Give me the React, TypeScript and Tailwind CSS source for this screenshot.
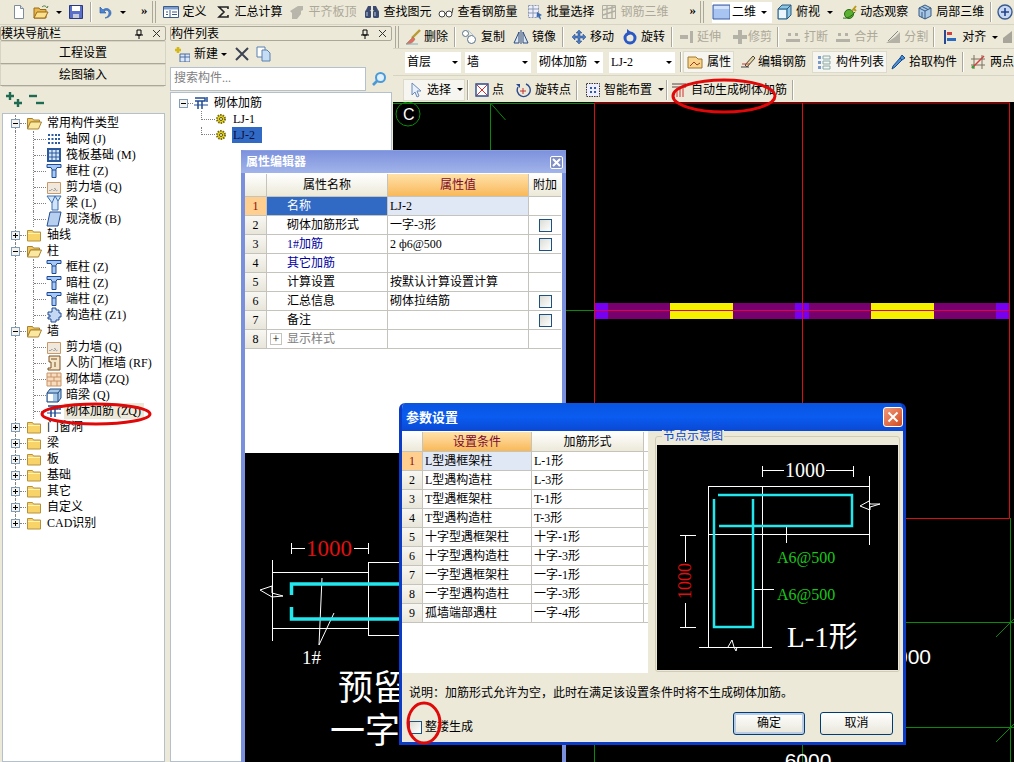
import { ReactNode } from "react";

type IconName = keyof typeof icons;

const icons = {
  file: (<><path d="M3.5 1.5h6l3 3v10h-9z" fill="#fff" stroke="#7f8c9a" /><path d="M9.5 1.5v3h3" fill="#dde" stroke="#7f8c9a" /></>),
  open: (<><path d="M1 4h5l1 1.5h6V14H1z" fill="#e8b84e" stroke="#9a6a14" /><path d="M1 14l3-6h11l-3 6z" fill="#fbe08e" stroke="#9a6a14" /><path d="M9 3c2-2 4-1 5 1l1-2" fill="none" stroke="#4a7a3a" /></>),
  save: (<><path d="M1.5 1.5h13v13h-13z" fill="#5a70c8" stroke="#2a3a80" /><path d="M4 2h8v5H4z" fill="#fff" /><path d="M5 10h6v4H5z" fill="#c8ccd8" /></>),
  undo: <path d="M3 3v6h6L7 7c3-2 5 0 5 2 0 3-2 4-4 5 4 0 6-3 6-5 0-4-5-6-8-3z" fill="#4a86d8" stroke="#24569c" strokeWidth=".6" />,
  define: (<><path d="M.5 2.5h15v11H.5z" fill="#fff" stroke="#3a5a8c" /><path d="M1 3h14v2.5H1z" fill="#7a9ccc" /><path d="M7 6v7M3 8h2M9 8h5M3 10.5h2M9 10.5h5" stroke="#3a5a8c" /></>),
  sigma: <path d="M3 3h10v2M13 3H4l5 5-5 5h9v-2" fill="none" stroke="#222" strokeWidth="1.6" />,
  flat: <path d="M1 7l8-5h5v4l-2 1v3l-4 5H3V9z" fill="#b8b6aa" />,
  binoc: (<><path d="M2 6l2-4h3v4zM14 6l-2-4H9v4z" fill="#3a4a70" /><rect x="1" y="6" width="6" height="8" rx="1.5" fill="#3a4a70" /><rect x="9" y="6" width="6" height="8" rx="1.5" fill="#3a4a70" /><path d="M3 8v4M11 8v4" stroke="#bcd" /></>),
  glasses: (<><circle cx="4" cy="10" r="3" fill="#fff" stroke="#444" /><circle cx="11" cy="10" r="3" fill="#fff" stroke="#444" /><path d="M7 9.5h1M14 9l1-5" stroke="#444" /></>),
  batch: (<><path d="M1.5 1.5h10v12h-10z" fill="#eef" stroke="#8a9ab0" strokeDasharray="2 1" /><path d="M1 5h11M1 9h11M6 2v11" stroke="#8a9ab0" /><path d="M10 8l5 3-2 1 1 3-1 .5-1.500-3-2 1z" fill="#3a6ab0" /></>),
  rebar3d: (<><path d="M1.500 1.500h13v13h-13z" fill="none" stroke="#b0aea2" /><path d="M2 6l12-3M2 11l12-4M6 2v12M11 2v12" stroke="#b0aea2" strokeWidth="1.4" /></>),
  square: (<><path d="M1 2h17v14H1z" fill="#a8c4f0" stroke="#3a5aa0" /><path d="M2 3h15v3H2z" fill="#d4e2fa" /></>),
  cube: (<><path d="M2 5l4-4h9v10l-4 4H2z" fill="#8cc4e4" stroke="#2a5a80" /><path d="M2 5h9v10M11 5l4-4" fill="none" stroke="#2a5a80" /><path d="M3 6h7v8H3z" fill="#eaf6fc" /></>),
  orbit: (<><circle cx="7" cy="10" r="4.500" fill="#5ab030" stroke="#2a6a14" /><path d="M10 7l4-5M12 5l2 2" stroke="#b89a20" strokeWidth="2" /><path d="M1 14c4 1 9-2 12-6" fill="none" stroke="#2a6a14" /></>),
  local3d: (<><path d="M8 1l6 3v8l-6 3-6-3V4z" fill="#a8c8e8" stroke="#3a5a80" /><path d="M2 4l6 3 6-3M8 7v8M5 2.500l6 3M5 13.500V8" fill="none" stroke="#3a5a80" /></>),
  zoom: (<><circle cx="8" cy="8" r="7" fill="#c8d8f0" stroke="#3a5a90" strokeWidth="1.400" /><path d="M8 4v8M4 8h8" stroke="#24428c" strokeWidth="1.600" /></>),
  erase: (<><path d="M15 1L7 9" stroke="#b89a30" strokeWidth="2.400" /><path d="M8 8L3 13l-2 2c4 0 7-1 9-5z" fill="#e86868" stroke="#884" strokeWidth=".6" /><path d="M1 15h12" stroke="#8ab" /></>),
  copy: (<><circle cx="4.500" cy="4.500" r="3" fill="#fff" stroke="#58708c" /><circle cx="10.500" cy="10.500" r="4" fill="#fff" stroke="#58708c" /><path d="M7 1l7 7" stroke="#b8c4d0" /></>),
  mirror: <path d="M8 1v14M6 3L1 14h5zM10 3l5 11h-5z" fill="#dde8f4" stroke="#2a4a80" />,
  move: <path d="M8 1l3 3H9v3h3V5l3 3-3 3V9H9v3h2l-3 3-3-3h2V9H4v2L1 8l3-3v2h3V4H5z" fill="#4a7ac0" stroke="#244a88" strokeWidth=".5" />,
  rotate: (<><circle cx="8" cy="9" r="5" fill="none" stroke="#2a58c4" strokeWidth="3" /><path d="M5 0l5 4-5 3z" fill="#2a58c4" /></>),
  extend: <path d="M1 6h8v4H1zM11 2h3v12h-3z" fill="#b4b2a6" />,
  trim: <path d="M6 1h4v5h5v4h-5v5H6v-5H1V6h5z" fill="#b4b2a6" />,
  cut: <path d="M1 10h14v3H1zM3 4h3v3H3zM10 4h3v3h-3z" fill="#b4b2a6" />,
  split: (<><path d="M1 14l9-6 5-5v11z" fill="#b4b2a6" /><path d="M3 12L13 2" stroke="#888" /></>),
  align: (<><path d="M2 1v14" stroke="#2a4a90" strokeWidth="2" /><path d="M4 3h5v3H4z" fill="#d04040" /><path d="M4 9h9v3H4z" fill="#2a6ac0" /></>),
  grayShape: <path d="M0 9l9-7v12H0z" fill="#a8a69a" />,
  props: (<><path d="M1 3h8l2 2h4v9H1z" fill="#f8d48c" stroke="#a07830" /><path d="M3 12l4-4 3 3 3-2" fill="none" stroke="#a04020" /></>),
  editBar: (<><path d="M1 13h8" stroke="#444" /><path d="M5 11l8-9 2 2-8 9z" fill="#e8d8a0" stroke="#444" /><path d="M2 10h8" stroke="#c04040" /></>),
  listIcon: (<><path d="M2 2h3v3H2zM2 7h3v3H2zM2 12h3v3H2z" fill="#7a9ac8" /><path d="M7 2h7v3H7zM7 7h7v3H7zM7 12h7v3H7z" fill="none" stroke="#8aa" /></>),
  pick: (<><path d="M12 1l3 3-3 2-2-2zM10 4l2 2-7 7-3 2 1-3z" fill="#4a90d8" stroke="#1a4a88" /></>),
  twoPts: (<><path d="M4 1v14M12 1v14M1 5h14M1 11h14" stroke="#7a7060" /><path d="M2 14L14 2" stroke="#d04040" strokeWidth="1.400" /><circle cx="3" cy="13" r="1.500" fill="#38a038" /></>),
  cursor: <path d="M4 1v12l3-3 2 5 2-1-2-5h4z" fill="#e8f0fc" stroke="#6a8ab8" />,
  point: (<><path d="M2 2h12v12H2z" fill="#fff" stroke="#2a4a90" strokeWidth="1.400" /><path d="M3 3l10 10M13 3L3 13" stroke="#d03030" /></>),
  rotPt: (<><path d="M11 2A6.500 6.500 0 1 1 3 5" fill="none" stroke="#2a4a90" strokeWidth="1.400" /><path d="M1 2l4 0 0 4z" fill="#2a4a90" /><path d="M8 6v6M5 9h6" stroke="#c03030" /></>),
  smart: (<><path d="M1.500 1.500h13v13h-13z" fill="#eef" stroke="#333" strokeDasharray="1.500 1" /><path d="M5 5h2v2H5zM9 5h2v2H9zM5 9h2v2H5zM9 9h2v2H9z" fill="#2a5aa0" /></>),
  auto: (<><path d="M1 2h14M1 5h14" stroke="#604040" /><path d="M6 6v9M9 6v9M12 6v9" stroke="#d03030" /></>),
  plus: (<><path d="M4 0v8M0 4h8" stroke="#1f6a52" strokeWidth="2.400" /><path d="M12 7v8M8 11h8" stroke="#1f6a52" strokeWidth="2.400" /></>),
  minus: (<><path d="M0 4h8" stroke="#1f6a52" strokeWidth="2.400" /><path d="M7 11h8" stroke="#1f6a52" strokeWidth="2.400" /></>),
  newItem: (<><path d="M4 1v6M1 4h6" stroke="#d4b818" strokeWidth="2.600" /><path d="M6 8h10v8H6z" fill="#dce8f8" stroke="#4a6ca0" /><path d="M6 11h10M11 8v8" stroke="#4a6ca0" /></>),
  del: <path d="M2 2l12 12M14 2L2 14" stroke="#3c4454" strokeWidth="2" />,
  dup: (<><path d="M1 1h8v10H1z" fill="#fff" stroke="#5a80b0" /><path d="M6 4h5l3 3v8H6z" fill="#c4dcf4" stroke="#5a80b0" /></>),
  search: (<><circle cx="9.500" cy="6.500" r="4.500" fill="#e0f0fc" stroke="#4a9ad8" strokeWidth="2" /><path d="M6 10l-4 4" stroke="#4a9ad8" strokeWidth="2.600" /></>),
  folder: (<><path d="M1.500 3.500h5l1 1.500h7v9h-13z" fill="#f8d468" stroke="#b8923a" /><path d="M2 6h12v1H2z" fill="#fff4b8" /></>),
  folderOpen: (<><path d="M1.500 3.500h5l1 1.500h6v2h-9l-3 7z" fill="#f0c860" stroke="#a88232" /><path d="M1.500 14l3-7h11l-3 7z" fill="#fbe8a0" stroke="#a88232" /></>),
  grid: <path d="M2 3h2v2H2zM5.500 3h2v2h-2zM9 3h2v2H9zM12 3h2v2h-2zM2 7h2v2H2zM5.500 7h2v2h-2zM9 7h2v2H9zM12 7h2v2h-2zM2 11h2v2H2zM5.500 11h2v2h-2zM9 11h2v2H9zM12 11h2v2h-2z" fill="#2a5aa4" />,
  raft: (<><path d="M1 1h14v14H1z" fill="#2a5a9c" /><path d="M3 3h10v10H3z" fill="#d4e4f8" /><path d="M6 3v10M10 3v10M3 6h10M3 10h10" stroke="#2a5a9c" /></>),
  column: (<><path d="M1 1.500h14v3H11l-1 2v8H6v-8l-1-2H1z" fill="#a8c8f4" stroke="#1f4a94" /><path d="M6 7h4" stroke="#1f4a94" /></>),
  shear: (<><path d="M1.500 3.500h13v11h-13z" fill="#f0e8dc" stroke="#c89a68" /><path d="M3 12l1-1 1 1 1-2 2 2 1-3 1 3 2-1" fill="none" stroke="#888" strokeDasharray="1 1" /></>),
  beam: (<><path d="M1 1h14l-3 5v9H6V8z" fill="#d4e4f8" stroke="#3a70b0" /><path d="M6 8l3-7M12 6L9 1" stroke="#3a70b0" /></>),
  slab: <path d="M4 1h11l-3 14H1z" fill="#b8d0f0" stroke="#1f4a94" />,
  struct: <path d="M6 1h4v2h3v3h2v4h-2v3h-3v2H5v-3H2v-2h2V8H2V5h4z" fill="#c4d8f4" stroke="#1f4a94" />,
  door: (<><path d="M3 1h11v14H2v-2h3V7H3z" fill="#f4e4c8" stroke="#7a5020" /><path d="M5 4h6M9 7v5" stroke="#7a5020" /></>),
  brick: (<><path d="M1 2h14v13H1z" fill="#f8dcc0" stroke="#c89468" /><path d="M1 6h14M1 10h14M5 2v4M11 2v4M8 6v4M5 10v5M11 10v5" stroke="#c89468" /></>),
  darkBeam: (<><path d="M1 6l3-4h11v9l-3 4H1z" fill="#a8c8e8" stroke="#1f4a80" /><path d="M1 6h11v9M12 6l3-4" fill="none" stroke="#1f4a80" /><path d="M2 7h5v7H2z" fill="#fff" /></>),
  rebar: (<><path d="M2 3h10v3H2M5 6v8M9 6v8M14 2v5" fill="none" stroke="#1f4a94" strokeWidth="1.500" /><path d="M1 10h14" stroke="#1f4a94" /></>),
  gear: (<><circle cx="6" cy="6" r="4" fill="#e8d818" stroke="#7a6a10" strokeDasharray="1.500 1" strokeWidth="2" /><circle cx="6" cy="6" r="1.500" fill="#fff" stroke="#5a5010" /></>),
};

function Ico({ name, size = 16 }: { name: IconName; size?: number }) {
  return (
    <svg width={size} height={size} viewBox={size === 12 ? "0 0 12 12" : size === 18 ? "0 0 18 18" : "0 0 16 16"} className="shrink-0">
      {icons[name]}
    </svg>
  );
}

const Caret = ({ className = "" }: { className?: string }) => (
  <span className={`inline-block w-0 h-0 border-x-[3px] border-x-transparent border-t-[3px] border-t-black ${className}`} />
);

const Sep = ({ className = "" }: { className?: string }) => (
  <span className={`inline-block w-[2px] h-[20px] border-l border-[#aca899] border-r border-r-white shrink-0 ${className}`} />
);

const Grip = ({ className = "" }: { className?: string }) => (
  <span className={`inline-block w-[4px] h-[22px] border-x border-[#aca899] shrink-0 ${className}`} />
);

function Tool({
  icon,
  label,
  off,
  caret,
  pressed,
  gap = "gap-[4px]",
  className = "",
}: {
  icon: IconName;
  label?: string;
  off?: boolean;
  caret?: boolean;
  pressed?: boolean;
  gap?: string;
  className?: string;
}) {
  return (
    <div
      className={`flex items-center h-[22px] shrink-0 whitespace-nowrap ${gap} ${off ? "text-[#aca899]" : "text-black"} ${
        pressed ? "bg-[#f6f5ef] border border-[#dcdacb]" : ""
      } ${className}`}
    >
      <Ico name={icon} />
      {label && <span>{label}</span>}
      {caret && <Caret className="ml-[3px]" />}
    </div>
  );
}

const More = ({ className = "" }: { className?: string }) => (
  <span className={`text-[13px] leading-none font-bold -mt-[6px] shrink-0 ${className}`}>»</span>
);

function TopBar() {
  return (
    <div className="flex items-center h-[25px] shrink-0 border-b border-[#d8d4c4]">
      <Grip className="ml-[2px] opacity-0" />
      <Tool icon="file" className="ml-[5px]" />
      <Tool icon="open" className="ml-[6px]" caret />
      <Tool icon="save" className="ml-[6px]" />
      <Sep className="ml-[6px]" />
      <Tool icon="undo" className="ml-[5px]" caret />
      <More className="ml-[15px]" />
      <Grip className="ml-[4px]" />
      <Tool icon="define" label="定义" className="ml-[7px]" />
      <Tool icon="sigma" label="汇总计算" className="ml-[8px]" />
      <Tool icon="flat" label="平齐板顶" off className="ml-[6px]" />
      <Tool icon="binoc" label="查找图元" className="ml-[7px]" />
      <Tool icon="glasses" label="查看钢筋量" className="ml-[6px]" />
      <Tool icon="batch" label="批量选择" className="ml-[9px]" />
      <Tool icon="rebar3d" label="钢筋三维" off className="ml-[6px]" />
      <More className="ml-[21px]" />
      <Grip className="ml-[4px]" />
      <div className="ml-[8px] flex items-center h-[21px] w-[60px] bg-white shrink-0">
        <Ico name="square" size={18} />
        <span className="ml-[2px]">二维</span>
        <Caret className="ml-[5px]" />
      </div>
      <Tool icon="cube" label="俯视" caret className="ml-[4px]" />
      <Tool icon="orbit" label="动态观察" className="ml-[9px]" gap="gap-[2px]" />
      <Tool icon="local3d" label="局部三维" className="ml-[9px]" gap="gap-[3px]" />
      <Sep className="ml-[6px]" />
      <Tool icon="zoom" className="ml-[5px]" />
    </div>
  );
}

function PanelTitle({ title }: { title: string }) {
  return (
    <div className="flex items-center h-[15px] mt-[1px] border border-[#aca899] rounded-[2px] shrink-0">
      <span className="flex-1 leading-none">{title}</span>
      <svg width="10" height="10" viewBox="0 0 10 10" className="mr-[8px]">
        <path d="M3 1h4v5H3zM1 6h8M5 6v4" fill="none" stroke="#000" />
      </svg>
      <svg width="9" height="9" viewBox="0 0 9 9" className="mr-[4px]">
        <path d="M1 1l7 7M8 1L1 8" stroke="#333" />
      </svg>
    </div>
  );
}

function Box({ open, className = "" }: { open: boolean; className?: string }) {
  return (
    <span className={`relative w-[9px] h-[9px] shrink-0 border border-[#7f9db9] bg-[#f4f3ee] flex items-center justify-center ${className}`}>
      <span className="w-[5px] h-px bg-black" />
      {!open && <span className="absolute w-px h-[5px] bg-black" />}
    </span>
  );
}

function Group({ label, open, last }: { label: string; open: boolean; last?: boolean }) {
  return (
    <div className="flex h-4 items-center ml-[12px] relative">
      <span className={`absolute left-0 top-0 border-l border-dotted border-[#808080] ${last ? "h-2" : "h-4"}`} />
      <Box open={open} className="-ml-[4px] z-10" />
      <span className="w-[6px] border-t border-dotted border-[#808080]" />
      <Ico name={open ? "folderOpen" : "folder"} />
      <span className="ml-[5px] whitespace-nowrap">{label}</span>
    </div>
  );
}

function Leaf({ icon, label, mark }: { icon: IconName; label: string; mark?: boolean }) {
  return (
    <div className="flex h-4 items-center ml-[12px] border-l border-dotted border-[#808080]">
      <span className="relative w-[18px] h-4 border-r border-dotted border-[#808080] shrink-0" />
      <span className="w-[12px] border-t border-dotted border-[#808080] shrink-0" />
      <Ico name={icon} />
      <span className={`ml-[2px] px-[2px] h-4 leading-4 whitespace-nowrap ${mark ? "bg-[#ece9d8] w-[80px]" : ""}`}>{label}</span>
    </div>
  );
}

function NavPanel() {
  return (
    <aside className="w-[166px] shrink-0 flex flex-col">
      <PanelTitle title="模块导航栏" />
      <button className="h-[23px] border border-[#d8d4c4] border-b-[#aca899] text-center shrink-0">工程设置</button>
      <button className="h-[22px] border border-[#d8d4c4] border-b-[#aca899] text-center shrink-0">绘图输入</button>
      <div className="h-[27px] mx-[2px] flex items-center gap-[7px] pl-[4px] border-t border-[#d8d4c4] shrink-0">
        <Ico name="plus" />
        <Ico name="minus" />
      </div>
      <div className="flex-1 bg-white ml-[2px] mr-[1px] border border-[#b4c0cc] pt-px overflow-hidden">
        <Group label="常用构件类型" open />
        <Leaf icon="grid" label="轴网 (J)" />
        <Leaf icon="raft" label="筏板基础 (M)" />
        <Leaf icon="column" label="框柱 (Z)" />
        <Leaf icon="shear" label="剪力墙 (Q)" />
        <Leaf icon="beam" label="梁 (L)" />
        <Leaf icon="slab" label="现浇板 (B)" />
        <Group label="轴线" open={false} />
        <Group label="柱" open />
        <Leaf icon="column" label="框柱 (Z)" />
        <Leaf icon="column" label="暗柱 (Z)" />
        <Leaf icon="column" label="端柱 (Z)" />
        <Leaf icon="struct" label="构造柱 (Z1)" />
        <Group label="墙" open />
        <Leaf icon="shear" label="剪力墙 (Q)" />
        <Leaf icon="door" label="人防门框墙 (RF)" />
        <Leaf icon="brick" label="砌体墙 (ZQ)" />
        <Leaf icon="darkBeam" label="暗梁 (Q)" />
        <Leaf icon="rebar" label="砌体加筋 (ZQ)" mark />
        <Group label="门窗洞" open={false} />
        <Group label="梁" open={false} />
        <Group label="板" open={false} />
        <Group label="基础" open={false} />
        <Group label="其它" open={false} />
        <Group label="自定义" open={false} />
        <Group label="CAD识别" open={false} last />
      </div>
    </aside>
  );
}

function ListPanel() {
  return (
    <aside className="w-[222px] ml-[4px] mr-[1px] shrink-0 flex flex-col">
      <PanelTitle title="构件列表" />
      <div className="h-[26px] flex items-center pl-[4px] shrink-0">
        <Ico name="newItem" />
        <span className="ml-[4px]">新建</span>
        <Caret className="ml-[3px]" />
        <span className="ml-[7px]"><Ico name="del" /></span>
        <span className="ml-[6px]"><Ico name="dup" /></span>
      </div>
      <div className="flex h-[24px] shrink-0">
        <div className="w-[196px] bg-white border border-[#b4c0cc] pl-[3px] leading-[21px] text-[#808080]">搜索构件...</div>
        <div className="flex-1 flex items-center justify-center"><Ico name="search" /></div>
      </div>
      <div className="flex-1 bg-white border border-[#b4c0cc] mt-[1px] pl-[8px] pt-[2px] overflow-hidden">
        <div className="flex h-4 items-center">
          <Box open />
          <span className="w-[5px] border-t border-dotted border-[#808080]" />
          <Ico name="rebar" />
          <span className="ml-[5px]">砌体加筋</span>
        </div>
        {["LJ-1", "LJ-2"].map((name, i) => (
          <div key={name} className="flex h-4 items-center ml-[22px]">
            <span className={`border-l border-b border-dotted border-[#808080] w-[14px] self-start ${i === 0 ? "h-[9px]" : "h-[8px]"}`} />
            <Ico name="gear" size={12} />
            <span className={`ml-[5px] pl-[1px] leading-4 ${i === 1 ? "bg-[#316ac5] w-[30px] h-[16px] text-[#10103a]" : ""}`}>{name}</span>
          </div>
        ))}
      </div>
    </aside>
  );
}

function Combo({ label, className }: { label: string; className: string }) {
  return (
    <div className={`h-[21px] bg-white flex items-center justify-between pl-[2px] pr-[3px] shrink-0 ${className}`}>
      <span>{label}</span>
      <Caret />
    </div>
  );
}

function CadCanvas() {
  return (
    <svg viewBox="393 102 621 660" className="w-full flex-1 min-h-0 bg-black block">
      <g stroke="#0a8a0a" fill="none">
        <path d="M393 103.500H594M490.500 103v47M490.500 103l15 17M566 310.500h30" />
        <circle cx="408" cy="114" r="12" />
        <path d="M802.500 745v20M1010.500 518v250M906 622.500h108M906 727.500h108M996 637l18-18M996 742l18-18M594.500 745v20" />
      </g>
      <text x="403" y="120" fill="#fff" fontSize="16" fontFamily="Liberation Sans">C</text>
      <rect x="594" y="303" width="416" height="16" fill="#78006e" />
      <rect x="595" y="303" width="13" height="16" fill="#7800f0" />
      <rect x="795" y="303" width="14" height="16" fill="#7800f0" />
      <rect x="996" y="303" width="14" height="16" fill="#7800f0" />
      <rect x="670" y="303" width="63" height="16" fill="#f4f000" />
      <rect x="871" y="303" width="63" height="16" fill="#f4f000" />
      <path d="M594 310.500h416" stroke="#e00050" />
      <path d="M594.500 103H1010M594.500 103V404M802.500 103V404M1009.500 103V518.500H906" fill="none" stroke="#d81010" />
      <text x="931" y="664" fill="#fff" fontSize="21" textAnchor="end" fontFamily="Liberation Sans">000</text>
      <text x="808" y="768" fill="#fff" fontSize="21" textAnchor="middle" fontFamily="Liberation Sans">6000</text>
    </svg>
  );
}

function RightArea() {
  return (
    <div className="flex-1 min-w-0 flex flex-col">
      <div className="h-[24px] flex items-center shrink-0 overflow-hidden">
        <Grip className="ml-[2px]" />
        <Tool icon="erase" label="删除" className="ml-[6px]" gap="gap-[3px]" />
        <Sep className="ml-[6px]" />
        <Tool icon="copy" label="复制" className="ml-[5px]" gap="gap-[4px]" />
        <Tool icon="mirror" label="镜像" className="ml-[8px]" gap="gap-[3px]" />
        <Sep className="ml-[6px]" />
        <Tool icon="move" label="移动" className="ml-[7px]" gap="gap-[3px]" />
        <Tool icon="rotate" label="旋转" className="ml-[8px]" gap="gap-[3px]" />
        <Sep className="ml-[6px]" />
        <Tool icon="extend" label="延伸" off className="ml-[6px]" gap="gap-[2px]" />
        <Tool icon="trim" label="修剪" off className="ml-[11px]" gap="gap-[0px]" />
        <Sep className="ml-[5px]" />
        <Tool icon="cut" label="打断" off className="ml-[6px]" gap="gap-[3px]" />
        <Tool icon="cut" label="合并" off className="ml-[7px]" gap="gap-[3px]" />
        <Tool icon="split" label="分割" off className="ml-[7px]" gap="gap-[3px]" />
        <Sep className="ml-[5px]" />
        <Tool icon="align" label="对齐" caret className="ml-[8px]" gap="gap-[3px]" />
        <Tool icon="grayShape" className="ml-[5px]" />
      </div>
      <div className="h-[27px] flex items-center shrink-0 border-t border-[#d8d4c4] overflow-hidden -mt-px">
        <Grip className="ml-[2px] opacity-0" />
        <Combo label="首层" className="ml-[6px] w-[56px]" />
        <Combo label="墙" className="ml-[4px] w-[66px]" />
        <Combo label="砌体加筋" className="ml-[6px] w-[66px]" />
        <Combo label="LJ-2" className="ml-[6px] w-[66px]" />
        <Sep className="ml-[5px]" />
        <Tool icon="props" label="属性" pressed className="ml-[1px] pl-[3px] pr-[2px]" />
        <Tool icon="editBar" label="编辑钢筋" className="ml-[6px]" gap="gap-[2px]" />
        <Tool icon="listIcon" label="构件列表" pressed className="ml-[6px] pl-[3px] pr-[2px]" />
        <Tool icon="pick" label="拾取构件" className="ml-[3px]" gap="gap-[3px]" />
        <Sep className="ml-[5px]" />
        <Tool icon="twoPts" label="两点" className="ml-[6px]" gap="gap-[4px]" />
      </div>
      <div className="h-[27px] flex items-center shrink-0 border-t border-[#d8d4c4] pt-px">
        <Grip className="ml-[2px] opacity-0" />
        <Tool icon="cursor" label="选择" caret pressed className="ml-[4px] pl-[4px] pr-[1px]" gap="gap-[3px]" />
        <Sep className="ml-[2px]" />
        <Tool icon="point" label="点" className="ml-[5px]" gap="gap-[2px]" />
        <Tool icon="rotPt" label="旋转点" className="ml-[11px]" gap="gap-[4px]" />
        <Sep className="ml-[5px]" />
        <Tool icon="smart" label="智能布置" caret className="ml-[7px]" gap="gap-[3px]" />
        <Sep className="ml-[2px]" />
        <Tool icon="auto" label="自动生成砌体加筋" className="ml-[3px]" gap="gap-[4px]" />
        <Sep className="ml-[5px]" />
      </div>
      <CadCanvas />
    </div>
  );
}

const Check = ({ className = "" }: { className?: string }) => (
  <span className={`block w-[13px] h-[13px] border border-[#1c5180] bg-gradient-to-br from-[#dcdcd6] to-white shrink-0 ${className}`} />
);

function RowNum({ n, active }: { n: number; active?: boolean }) {
  return (
    <div
      className={`h-full flex items-center justify-center border-r border-[#c4c4bc] ${
        active ? "bg-[#ffcf8f] text-[#8a1010]" : "bg-gradient-to-b from-[#f8f7f2] to-[#e8e6da]"
      }`}
    >
      {n}
    </div>
  );
}

const attrs = [
  { name: "名称", value: "LJ-2", check: false },
  { name: "砌体加筋形式", value: "一字-3形", check: true },
  { name: "1#加筋", value: "2 ф6@500", check: true, blue: true },
  { name: "其它加筋", value: "", check: false, blue: true },
  { name: "计算设置", value: "按默认计算设置计算", check: false },
  { name: "汇总信息", value: "砌体拉结筋", check: true },
  { name: "备注", value: "", check: true },
  { name: "显示样式", value: "", check: false, gray: true },
];

function PropertyEditor() {
  return (
    <div className="absolute left-[241px] top-[150px] w-[325px] h-[612px] flex flex-col border-x-[4px] border-[#7b90dc] border-t border-t-[#8aa0e4]">
      <div className="h-[22px] -mx-[4px] flex items-center justify-between pl-[5px] pr-[3px] bg-gradient-to-b from-[#7d92dc] to-[#a2b4ea] shrink-0">
        <span className="text-white font-bold leading-none">属性编辑器</span>
        <span className="w-[13px] h-[13px] rounded-[2px] bg-[#8290c8] border border-white flex items-center justify-center">
          <svg width="9" height="9" viewBox="0 0 9 9"><path d="M1 1l7 7M8 1L1 8" stroke="#fff" strokeWidth="2" /></svg>
        </span>
      </div>
      <div className="h-[280px] bg-white shrink-0 pt-px pr-px">
        <div className="grid grid-cols-[22px_121px_141px_1fr] h-[23px] border-b border-[#c4c4bc]">
          <div className="bg-gradient-to-b from-white to-[#ece9d8] border-r border-[#c4c4bc]" />
          <div className="bg-gradient-to-b from-white to-[#ece9d8] border-r border-[#c4c4bc] flex items-center justify-center">属性名称</div>
          <div className="bg-gradient-to-b from-[#ffe2a8] to-[#f8b858] border-r border-[#c4c4bc] flex items-center justify-center text-[#7a0a30]">属性值</div>
          <div className="bg-gradient-to-b from-white to-[#ece9d8] flex items-center justify-center">附加</div>
        </div>
        {attrs.map((a, i) => (
          <div key={a.name} className="grid grid-cols-[22px_121px_141px_1fr] h-[19px] border-b border-[#c4c4bc]">
            <RowNum n={i + 1} active={i === 0} />
            <div
              className={`flex items-center pl-[20px] border-r border-[#c4c4bc] ${
                i === 0 ? "bg-[#316ac5] text-white" : a.blue ? "text-[#0000a0]" : a.gray ? "text-[#808080]" : ""
              }`}
            >
              {a.gray && (
                <span className="w-[12px] h-[12px] -ml-[17px] mr-[5px] border border-[#c4c4bc] flex items-center justify-center text-black leading-none text-[12px]">+</span>
              )}
              {a.name}
            </div>
            <div className={`flex items-center pl-[2px] border-r border-[#c4c4bc] whitespace-nowrap ${i === 0 ? "bg-[#e0e8f6]" : ""}`}>{a.value}</div>
            <div className="flex items-center justify-center">{a.check && <Check />}</div>
          </div>
        ))}
      </div>
      <svg viewBox="245 453 317 309" className="w-full flex-1 min-h-0 bg-black block">
        <g stroke="#fff" fill="none">
          <path d="M291.500 543v11M368.500 543v11M291 548.500h14M354 548.500h14" />
          <path d="M272.500 560v81M272 572.500h96M272 628.500h96M368.500 562v73M368 562.500h40M368 635.500h40" />
          <path d="M260 590l12-4v7l11 3-11 1-12-7zM322 578l-3 67 15-32" />
        </g>
        <path d="M291.500 595v-11H410M291.500 607v12H410" fill="none" stroke="#22e8ee" strokeWidth="3.500" />
        <text x="329" y="556" fill="#e01010" fontSize="23" textAnchor="middle" fontFamily="Liberation Serif">1000</text>
        <text x="302" y="664" fill="#fff" fontSize="19" fontFamily="Liberation Serif">1#</text>
        <text x="338" y="700" fill="#fff" fontSize="35" fontFamily="Noto Sans CJK SC">预留</text>
        <text x="330" y="743" fill="#fff" fontSize="35" fontFamily="Noto Sans CJK SC">一字</text>
      </svg>
    </div>
  );
}

const params = [
  ["L型遇框架柱", "L-1形"],
  ["L型遇构造柱", "L-3形"],
  ["T型遇框架柱", "T-1形"],
  ["T型遇构造柱", "T-3形"],
  ["十字型遇框架柱", "十字-1形"],
  ["十字型遇构造柱", "十字-3形"],
  ["一字型遇框架柱", "一字-1形"],
  ["一字型遇构造柱", "一字-3形"],
  ["孤墙端部遇柱", "一字-4形"],
];

function NodeDiagram() {
  return (
    <svg viewBox="657 446 241 225" className="w-[241px] h-[225px] bg-black block">
      <g stroke="#fff" fill="none">
        <path d="M762.500 467v11M853.500 467v11M762 471.500h22M826 471.500h27" />
        <path d="M708.500 487.500H869M708.500 535.500H869M708.500 487v161M762.500 487v161M699 648.500h73M869.500 477v69M786.500 527v17" />
        <path d="M860 507l9-5 1 3 10 0-10 3 0 3zM728 648l4-7 2 7 2 4 1-4M754 590.500h20" />
        <path d="M685.500 537v26M685.500 604v24M680 536.500h16M680 628.500h16" />
      </g>
      <path d="M718 496h134v31H719M714 500v128h39V500" fill="none" stroke="#22e8ee" strokeWidth="2.500" />
      <text x="805" y="478" fill="#fff" fontSize="20" textAnchor="middle" fontFamily="Liberation Serif">1000</text>
      <text x="0" y="0" fill="#e01010" fontSize="18" textAnchor="middle" fontFamily="Liberation Serif" transform="translate(691 582) rotate(-90)">1000</text>
      <text x="777" y="564" fill="#18c818" fontSize="16" fontFamily="Liberation Serif">A6@500</text>
      <text x="777" y="601" fill="#18c818" fontSize="16" fontFamily="Liberation Serif">A6@500</text>
      <text x="787" y="648" fill="#fff" fontSize="29" fontFamily="Liberation Serif, Noto Sans CJK SC">L-1形</text>
    </svg>
  );
}

function ParamDialog() {
  return (
    <div className="absolute left-[399px] top-[403px] w-[507px] h-[342px] flex flex-col rounded-t-[6px] overflow-hidden border-x-[3px] border-b-[3px] border-[#0a3cc8]">
      <div className="h-[28px] -mx-[3px] flex items-center justify-between pl-[7px] pr-[3px] bg-gradient-to-b from-[#0a54e0] via-[#0a5cf0] to-[#0a48d4] shrink-0">
        <span className="text-white font-bold text-[13px] leading-none">参数设置</span>
        <span className="w-[20px] h-[20px] rounded-[3px] bg-gradient-to-br from-[#f09878] to-[#d04818] border border-white flex items-center justify-center">
          <svg width="12" height="12" viewBox="0 0 12 12"><path d="M1.500 1.500l9 9M10.500 1.500l-9 9" stroke="#fff" strokeWidth="2" /></svg>
        </span>
      </div>
      <div className="flex-1 bg-[#ece9d8] flex flex-col min-h-0">
        <div className="flex h-[242px] shrink-0">
          <div className="w-[246px] bg-white shrink-0 pt-px">
            <div className="grid grid-cols-[21px_109px_112px] h-[20px] border-b border-[#c4c4bc]">
              <div className="bg-gradient-to-b from-white to-[#ece9d8] border-r border-[#c4c4bc]" />
              <div className="bg-gradient-to-b from-[#ffe2a8] to-[#f8b858] border-r border-[#c4c4bc] flex items-center justify-center text-[#7a0a30]">设置条件</div>
              <div className="bg-gradient-to-b from-white to-[#ece9d8] flex items-center justify-center border-r border-[#c4c4bc]">加筋形式</div>
            </div>
            {params.map((p, i) => (
              <div key={p[0]} className="grid grid-cols-[21px_109px_112px] h-[19px] border-b border-[#c4c4bc]">
                <RowNum n={i + 1} active={i === 0} />
                <div className={`flex items-center pl-[2px] border-r border-[#c4c4bc] whitespace-nowrap ${i === 0 ? "bg-[#e0e8f6]" : ""}`}>{p[0]}</div>
                <div className="flex items-center pl-[2px] border-r border-[#c4c4bc] whitespace-nowrap">{p[1]}</div>
              </div>
            ))}
          </div>
          <div className="relative ml-[7px] mt-[5px] w-[245px] h-[236px] border border-[#d0ccb8] rounded-[3px] pt-[8px] pl-[1px]">
            <span className="absolute left-[6px] -top-[7px] bg-[#ece9d8] px-[1px] leading-[13px] text-[#0046d5]">节点示意图</span>
            <NodeDiagram />
          </div>
        </div>
        <p className="ml-[7px] mt-[12px] leading-[16px] whitespace-nowrap">说明：加筋形式允许为空，此时在满足该设置条件时将不生成砌体加筋。</p>
        <div className="flex items-center mt-[10px] h-[24px]">
          <Check className="ml-[7px] mt-[8px]" />
          <span className="ml-[3px] mt-[8px]">整楼生成</span>
          <button className="ml-[260px] w-[72px] h-[23px] rounded-[3px] border border-[#003c74] bg-gradient-to-b from-white to-[#e8e6da] shadow-[inset_0_0_0_2px_#b8cce8]">确定</button>
          <button className="ml-[15px] w-[73px] h-[23px] rounded-[3px] border border-[#003c74] bg-gradient-to-b from-white to-[#e8e6da]">取消</button>
        </div>
      </div>
    </div>
  );
}

function Marks(): ReactNode {
  return (
    <svg width="1014" height="762" viewBox="0 0 1014 762" fill="none" stroke="#e00808" strokeWidth="3" className="absolute left-0 top-0 pointer-events-none">
      <ellipse cx="724" cy="96" rx="51" ry="16" />
      <ellipse cx="96" cy="414" rx="54" ry="10" />
      <ellipse cx="424" cy="723" rx="16" ry="20" />
    </svg>
  );
}

export default function App() {
  return (
    <div className="relative w-[1014px] h-[762px] overflow-hidden flex flex-col bg-[#ece9d8] text-black text-[12px] [font-family:'Liberation_Serif','Noto_Sans_CJK_SC',serif]">
      <TopBar />
      <div className="flex flex-1 min-h-0">
        <NavPanel />
        <ListPanel />
        <RightArea />
      </div>
      <PropertyEditor />
      <ParamDialog />
      <Marks />
    </div>
  );
}
